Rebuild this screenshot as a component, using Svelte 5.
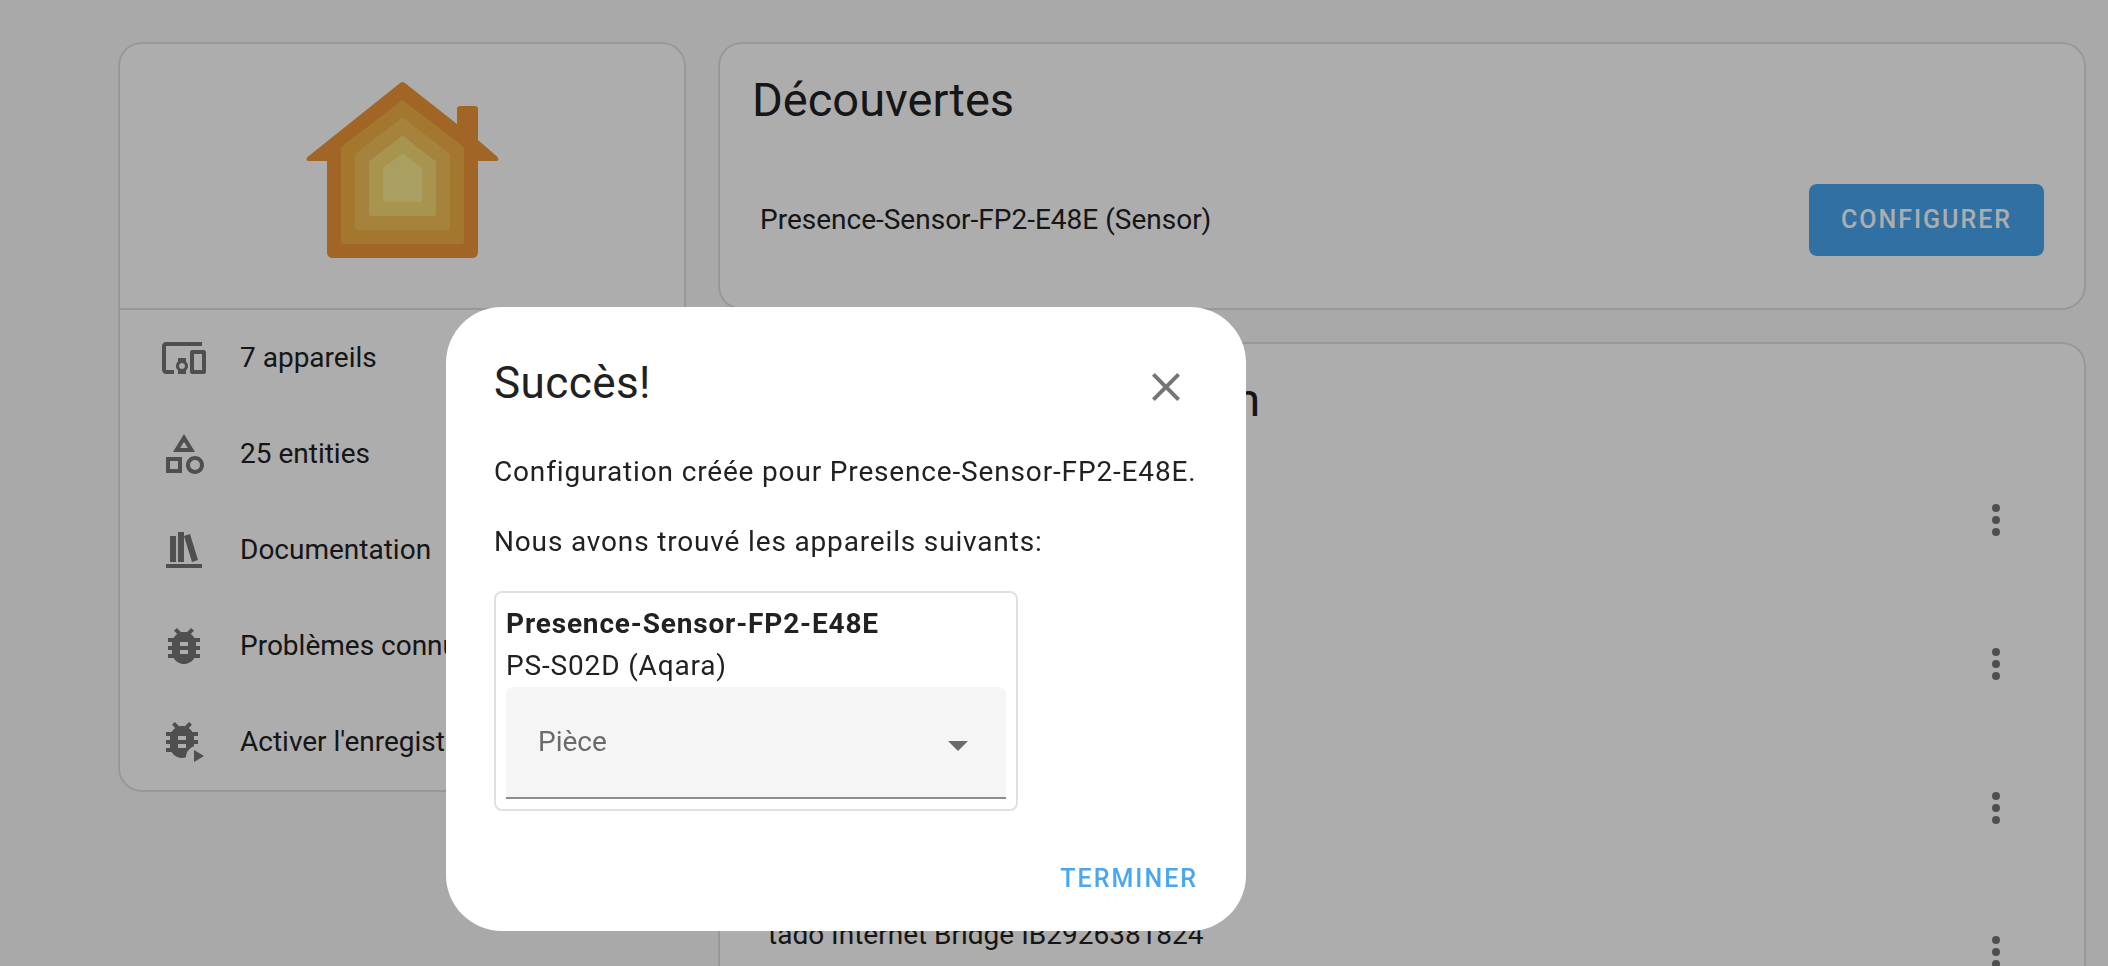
<script>
  const icons = {
    devices:
      "M3 6H21V4H3C1.9 4 1 4.9 1 6V18C1 19.1 1.9 20 3 20H7V18H3V6M13 12H9V13.78C8.39 14.33 8 15.11 8 16C8 16.89 8.39 17.67 9 18.22V20H13V18.22C13.61 17.67 14 16.88 14 16S13.61 14.33 13 13.78V12M11 17.5C10.17 17.5 9.5 16.83 9.5 16S10.17 14.5 11 14.5 12.5 15.17 12.5 16 11.83 17.5 11 17.5M22 8H16C15.5 8 15 8.5 15 9V19C15 19.5 15.5 20 16 20H22C22.5 20 23 19.5 23 19V9C23 8.5 22.5 8 22 8M21 18H17V10H21V18Z",
    shapes:
      "M11,13.5V21.5H3V13.5H11M9,15.5H5V19.5H9V15.5M12,2L17.5,11H6.5L12,2M12,5.86L10.08,9H13.92L12,5.86M17.5,13C20,13 22,15 22,17.5C22,20 20,22 17.5,22C15,22 13,20 13,17.5C13,15 15,13 17.5,13M17.5,15A2.5,2.5 0 0,0 15,17.5A2.5,2.5 0 0,0 17.5,20A2.5,2.5 0 0,0 20,17.5A2.5,2.5 0 0,0 17.5,15Z",
    bookshelf: "M9 3V18H12V3H9M12 5L16 18L19 17L15 4L12 5M5 5V18H8V5H5M3 19V21H21V19H3Z",
    bug:
      "M14,12H10V10H14M14,16H10V14H14M20,8H17.19C16.74,7.22 16.12,6.55 15.37,6.04L17,4.41L15.59,3L13.42,5.17C12.96,5.06 12.5,5 12,5C11.5,5 11.04,5.06 10.59,5.17L8.41,3L7,4.41L8.62,6.04C7.88,6.55 7.26,7.22 6.81,8H4V10H6.09C6.04,10.33 6,10.66 6,11V12H4V14H6V15C6,15.34 6.04,15.67 6.09,16H4V18H6.81C7.85,19.79 9.78,21 12,21C14.22,21 16.15,19.79 17.19,18H20V16H17.91C17.96,15.67 18,15.34 18,15V14H20V12H18V11C18,10.66 17.96,10.33 17.91,10H20V8Z",
    bugPlay:
      "M13,11H9V9H13M13,15H9V13H13M19,7H16.19C15.74,6.22 15.12,5.55 14.37,5.04L16,3.41L14.59,2L12.42,4.17C11.96,4.06 11.5,4 11,4C10.5,4 10.04,4.06 9.59,4.17L7.41,2L6,3.41L7.62,5.04C6.88,5.55 6.26,6.22 5.81,7H3V9H5.09C5.04,9.33 5,9.66 5,10V11H3V13H5V14C5,14.34 5.04,14.67 5.09,15H3V17H5.81C6.85,18.79 8.78,20 11,20C11.7,20 12.38,19.88 13,19.66C12.9,17.2 14.6,14.9 17,14.1V13H19V11H17V10C17,9.66 16.96,9.33 16.91,9H19V7M17,16V22L22,19Z",
    dots:
      "M12,16A2,2 0 0,1 14,18A2,2 0 0,1 12,20A2,2 0 0,1 10,18A2,2 0 0,1 12,16M12,10A2,2 0 0,1 14,12A2,2 0 0,1 12,14A2,2 0 0,1 10,12A2,2 0 0,1 12,10M12,4A2,2 0 0,1 14,6A2,2 0 0,1 12,8A2,2 0 0,1 10,6A2,2 0 0,1 12,4Z",
    close:
      "M19,6.41L17.59,5L12,10.59L6.41,5L5,6.41L10.59,12L5,17.59L6.41,19L12,13.41L17.59,19L19,17.59L13.41,12L19,6.41Z",
  };

  const links = [
    { icon: icons.devices, label: "7 appareils" },
    { icon: icons.shapes, label: "25 entities" },
    { icon: icons.bookshelf, label: "Documentation" },
    { icon: icons.bug, label: "Problèmes connus" },
    { icon: icons.bugPlay, label: "Activer l'enregistrement" },
  ];

  const entries = ["", "", "", "tado Internet Bridge IB2926381824"];

  let open = $state(true);
  let area = $state("");
</script>

{#snippet icon(path)}
  <svg class="icon" viewBox="0 0 24 24" aria-hidden="true"><path d={path} /></svg>
{/snippet}

<div class="page">
  <aside class="card overview">
    <div class="brand">
      <svg class="logo" viewBox="306 82 193 176" aria-hidden="true">
        <path
          fill="#ed9638"
          d="M399.500 83.500Q402.500 80.500 405.500 83.500L457 124V109Q457 106 460 106H475Q478 106 478 109V140L497.500 157Q500 161 496 161H478V252Q478 258 472 258H333Q327 258 327 252V161H309Q305 161 307.500 157Z"
        />
        <path fill="#f0b045" d="M402.500 100L464 147V241Q464 244 461 244H344Q341 244 341 241V147Z" />
        <path fill="#f3c25b" d="M402.500 117.500L450 154V227Q450 230 447 230H358Q355 230 355 227V154Z" />
        <path fill="#f7da74" d="M402.500 135.500L436 161.500V213Q436 216 433 216H372Q369 216 369 213V161.500Z" />
        <path fill="#f9ea8f" d="M402.500 153.500L422 168V200Q422 202 420 202H385Q383 202 383 200V168Z" />
      </svg>
    </div>
    <nav>
      {#each links as link}
        <a class="link" href="#top">
          {@render icon(link.icon)}
          <span>{link.label}</span>
        </a>
      {/each}
    </nav>
  </aside>

  <main>
    <section class="card">
      <h1>Découvertes</h1>
      <div class="discovered">
        <span>Presence-Sensor-FP2-E48E (Sensor)</span>
        <button class="raised" onclick={() => (open = true)}>CONFIGURER</button>
      </div>
    </section>

    <section class="card">
      <h1>Entrées de configuration</h1>
      <ul>
        {#each entries as entry}
          <li class="entry">
            <span class="entry-name">{entry}</span>
            <button class="icon-button" aria-label="Menu">{@render icon(icons.dots)}</button>
          </li>
        {/each}
      </ul>
    </section>
  </main>
</div>

{#if open}
  <div class="scrim">
    <div class="dialog" role="dialog" aria-modal="true" aria-labelledby="dialog-title">
      <header>
        <h2 id="dialog-title">Succès!</h2>
        <button class="icon-button close" aria-label="Fermer" onclick={() => (open = false)}>
          {@render icon(icons.close)}
        </button>
      </header>
      <p>Configuration créée pour Presence-Sensor-FP2-E48E.</p>
      <p>Nous avons trouvé les appareils suivants:</p>
      <div class="device">
        <strong>Presence-Sensor-FP2-E48E</strong>
        <span>PS-S02D (Aqara)</span>
        <div class="field">
          <select aria-label="Pièce" bind:value={area}>
            <option value="">Pièce</option>
          </select>
          <svg class="arrow" viewBox="0 0 10 5" aria-hidden="true"><path d="M0 0L5 5L10 0Z" /></svg>
        </div>
      </div>
      <footer>
        <button class="flat" onclick={() => (open = false)}>TERMINER</button>
      </footer>
    </div>
  </div>
{/if}

<style>
  :global(body) {
    background: #fafafa;
    color: #212121;
    font: 28px/42px Roboto, sans-serif;
    overflow: hidden;
  }

  .page {
    display: grid;
    grid-template-columns: 568px minmax(0, 1fr);
    align-items: start;
    gap: 32px;
    padding: 42px 22px 0 118px;
    height: 100vh;
    box-sizing: border-box;
    overflow: hidden;
  }

  main {
    display: flex;
    flex-direction: column;
    gap: 32px;
  }

  .card {
    background: white;
    border: 2px solid #e0e0e0;
    border-radius: 24px;
  }

  .brand {
    display: flex;
    justify-content: center;
    padding: 38px 0 50px;
    border-bottom: 2px solid #e0e0e0;
  }

  .logo {
    display: block;
    width: 193px;
    height: 176px;
  }

  .icon {
    display: block;
    flex: none;
    width: 48px;
    height: 48px;
    fill: #757575;
  }

  .link {
    display: flex;
    align-items: center;
    gap: 32px;
    height: 96px;
    padding: 0 40px;
    color: inherit;
    text-decoration: none;
    white-space: nowrap;
    overflow: hidden;
  }

  h1,
  h2 {
    margin: 0;
    font-weight: 400;
    line-height: 64px;
  }

  h1 {
    padding: 24px 32px 0;
    font-size: 47px;
  }

  .discovered {
    display: flex;
    align-items: center;
    justify-content: space-between;
    padding: 52px 40px;
  }

  button {
    border: none;
    background: none;
    font: inherit;
    cursor: pointer;
  }

  .raised,
  .flat {
    height: 72px;
    font-size: 25px;
    font-weight: 500;
    letter-spacing: 2px;
  }

  .raised {
    padding: 0 32px;
    border-radius: 8px;
    background: #49a6ef;
    color: white;
  }

  .flat {
    padding: 0;
    color: #49a6ef;
  }

  .icon-button {
    padding: 0;
  }

  ul {
    margin: 0;
    padding: 16px 0 0;
    list-style: none;
  }

  .entry {
    display: flex;
    align-items: center;
    justify-content: space-between;
    height: 144px;
    padding: 0 64px 0 48px;
  }

  .entry-name {
    align-self: flex-start;
    padding-top: 34px;
  }

  .scrim {
    position: fixed;
    inset: 0;
    background: rgba(0, 0, 0, 0.32);
  }

  .dialog {
    position: absolute;
    top: 307px;
    left: 446px;
    width: 800px;
    box-sizing: border-box;
    padding: 44px 48px 16px;
    border-radius: 56px;
    background: white;
    letter-spacing: 0.03em;
  }

  header {
    display: flex;
    align-items: flex-start;
    justify-content: space-between;
    padding-right: 8px;
    margin-bottom: 28px;
  }

  .close {
    height: 72px;
  }

  h2 {
    font-size: 44px;
    letter-spacing: 0.01em;
  }

  p {
    margin: 0 0 28px;
  }

  .device {
    display: flex;
    flex-direction: column;
    width: 500px;
    padding: 10px;
    border: 2px solid #e0e0e0;
    border-radius: 8px;
  }

  .field {
    position: relative;
  }

  select {
    display: block;
    width: 100%;
    height: 112px;
    padding: 0 80px 0 32px;
    border: none;
    border-bottom: 2px solid #8c8c8c;
    border-radius: 8px 8px 0 0;
    background: #f5f5f5;
    color: #6b6b6b;
    font: inherit;
    appearance: none;
  }

  .arrow {
    position: absolute;
    top: 54px;
    right: 38px;
    width: 20px;
    height: 10px;
    fill: #6b6b6b;
    pointer-events: none;
  }

  footer {
    display: flex;
    justify-content: flex-end;
    padding-top: 32px;
  }
</style>
